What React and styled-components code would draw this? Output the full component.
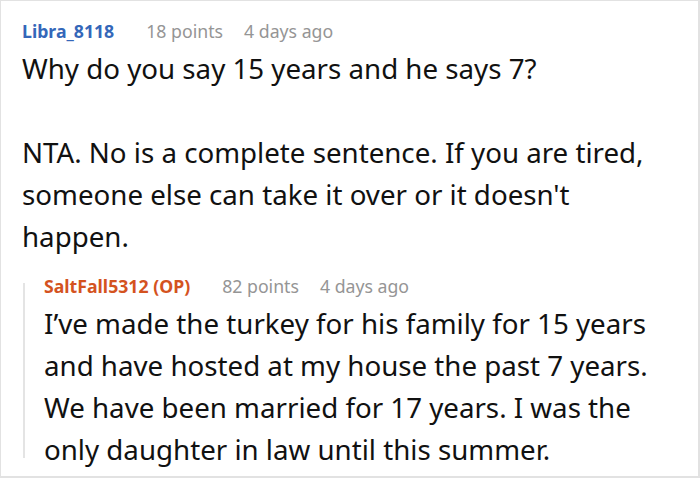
import React from 'react';
import styled, { createGlobalStyle } from 'styled-components';

const GlobalStyle = createGlobalStyle`
    html, body {
        margin: 0;
        padding: 0;
        background: #fff;
    }
    body {
        font-family: "Noto Sans", "Open Sans", sans-serif;
        color: #111;
    }
`;

const Thread = styled.div`
    box-sizing: border-box;
    width: 700px;
    height: 478px;
    overflow: hidden;
    border: 1px solid #e2e2e2;
    border-right-width: 2px;
    border-bottom-width: 2px;
    padding: 16px 22px 0 21px;
`;

const Header = styled.div`
    display: flex;
    align-items: baseline;
    gap: 21px;
    font-size: 17.7px;
    line-height: 28px;
`;

const Author = styled.span`
    font-weight: 700;
    margin-right: 11px;
    color: ${props => props.op ? '#d4531f' : '#3467b9'};
`;

const Meta = styled.span`
    color: #959595;
`;

const Body = styled.div`
    margin-top: 2px;
    font-size: 27.7px;
    line-height: 42px;

    p {
        margin: 0 0 42px;
    }
    p:last-child {
        margin-bottom: 0;
    }
`;

const Reply = styled.div`
    display: flex;
    margin-top: 15px;
`;

const ReplyBar = styled.div`
    flex: 0 0 2px;
    background: #e4e4e4;
    margin: 11px 19px 12px 1px;
`;

const ReplyContent = styled.div`
    flex: 1;
    min-width: 0;
`;

const Comment = ({author, op, points, age, children}) => (
    <>
        <Header>
            <Author op={op}>{author}</Author>
            <Meta>{points} points</Meta>
            <Meta>{age}</Meta>
        </Header>
        <Body>{children}</Body>
    </>
);

export default function App() {
    return <>
        <GlobalStyle/>
        <Thread>
            <Comment author="Libra_8118" points={18} age="4 days ago">
                <p>Why do you say 15 years and he says 7?</p>
                <p>NTA. No is a complete sentence. If you are tired, someone else can take it over or it doesn't happen.</p>
            </Comment>
            <Reply>
                <ReplyBar/>
                <ReplyContent>
                    <Comment author="SaltFall5312 (OP)" op points={82} age="4 days ago">
                        <p>I’ve made the turkey for his family for 15 years and have hosted at my house the past 7 years. We have been married for 17 years. I was the only daughter in law until this summer.</p>
                    </Comment>
                </ReplyContent>
            </Reply>
        </Thread>
    </>;
}
